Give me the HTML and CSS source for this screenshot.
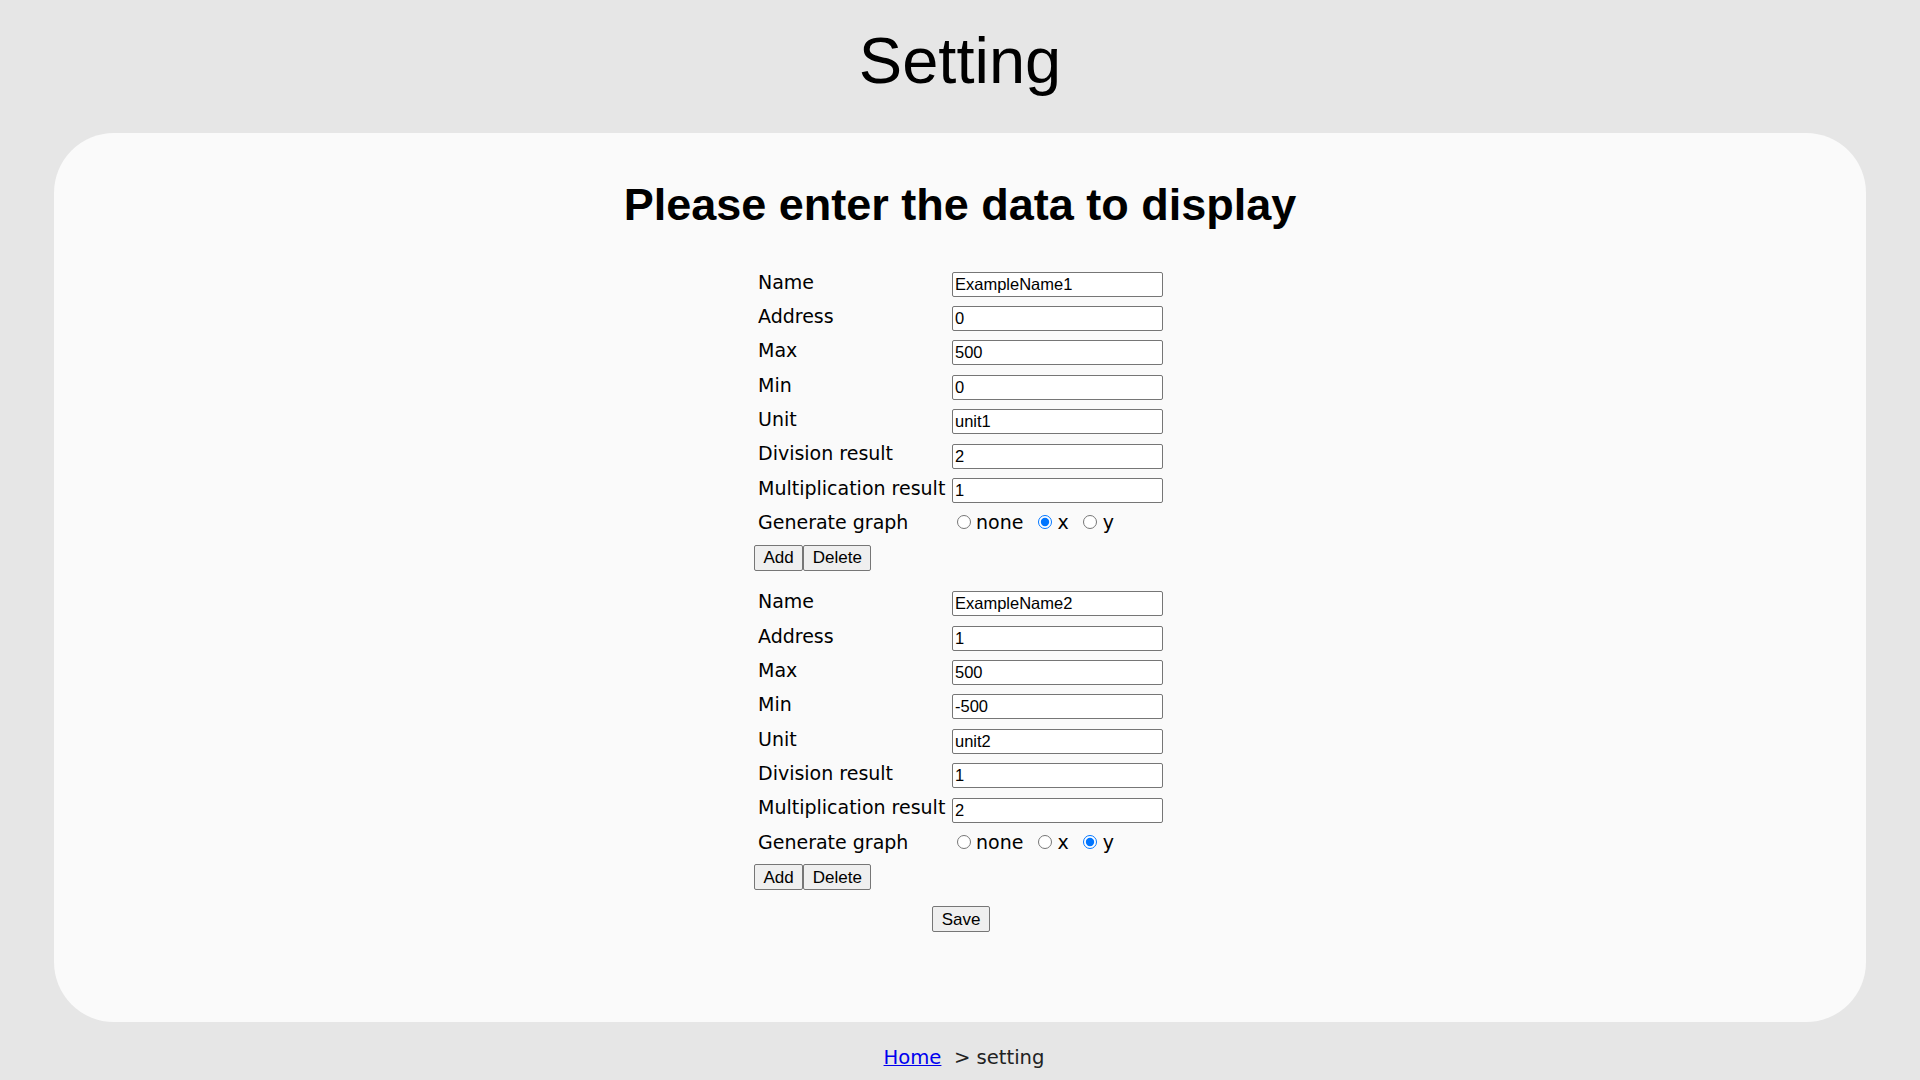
FILE: index.html
```html
<!DOCTYPE html>
<html lang="en">
<head>
<meta charset="utf-8">
<title>Setting</title>
<link rel="stylesheet" href="styles.css">
</head>
<body>
<h1 class="page-title">Setting</h1>
<main class="card">
  <h2 class="card-title">Please enter the data to display</h2>
  <form class="settings">
    <div class="entry">
      <div class="fields">
        <label class="lbl">Name</label><div class="val"><input class="txt" type="text" value="ExampleName1"></div>
        <label class="lbl">Address</label><div class="val"><input class="txt" type="text" value="0"></div>
        <label class="lbl">Max</label><div class="val"><input class="txt" type="text" value="500"></div>
        <label class="lbl">Min</label><div class="val"><input class="txt" type="text" value="0"></div>
        <label class="lbl">Unit</label><div class="val"><input class="txt" type="text" value="unit1"></div>
        <label class="lbl">Division result</label><div class="val"><input class="txt" type="text" value="2"></div>
        <label class="lbl">Multiplication result</label><div class="val"><input class="txt" type="text" value="1"></div>
        <span class="lbl">Generate graph</span>
        <div class="radios">
          <label class="opt"><input class="rad" type="radio" name="g1">none</label><label class="opt"><input class="rad" type="radio" name="g1" checked>x</label><label class="opt"><input class="rad" type="radio" name="g1">y</label>
        </div>
      </div>
      <div class="actions"><button type="button" class="btn">Add</button><button type="button" class="btn">Delete</button></div>
    </div>
    <div class="entry">
      <div class="fields">
        <label class="lbl">Name</label><div class="val"><input class="txt" type="text" value="ExampleName2"></div>
        <label class="lbl">Address</label><div class="val"><input class="txt" type="text" value="1"></div>
        <label class="lbl">Max</label><div class="val"><input class="txt" type="text" value="500"></div>
        <label class="lbl">Min</label><div class="val"><input class="txt" type="text" value="-500"></div>
        <label class="lbl">Unit</label><div class="val"><input class="txt" type="text" value="unit2"></div>
        <label class="lbl">Division result</label><div class="val"><input class="txt" type="text" value="1"></div>
        <label class="lbl">Multiplication result</label><div class="val"><input class="txt" type="text" value="2"></div>
        <span class="lbl">Generate graph</span>
        <div class="radios">
          <label class="opt"><input class="rad" type="radio" name="g2">none</label><label class="opt"><input class="rad" type="radio" name="g2">x</label><label class="opt"><input class="rad" type="radio" name="g2" checked>y</label>
        </div>
      </div>
      <div class="actions"><button type="button" class="btn">Add</button><button type="button" class="btn">Delete</button></div>
    </div>
    <div class="save-row"><button type="button" class="btn">Save</button></div>
  </form>
</main>
<footer class="crumbs"><a href="#" class="crumb-link">Home</a>&nbsp; &gt; setting</footer>
</body>
</html>
```

FILE: styles.css
```css
html, body {
  margin: 0;
  padding: 0;
}

body {
  background: #e6e6e6;
  color: #000;
  font-family: "DejaVu Sans", Verdana, sans-serif;
}

.page-title {
  margin: 24px 0 0;
  font-family: "Liberation Sans", Arial, sans-serif;
  font-weight: normal;
  font-size: 65px;
  line-height: 74px;
  text-align: center;
  color: #000;
}

.card {
  margin: 35px 54px 0;
  background: #fafafa;
  border-radius: 60px;
  padding: 46px 0 90px;
}

.card-title {
  margin: 0;
  font-family: "Liberation Sans", Arial, sans-serif;
  font-weight: bold;
  font-size: 45px;
  line-height: 52px;
  text-align: center;
}

.settings {
  width: 412px;
  margin: 36px auto 0;
  display: flex;
  flex-direction: column;
  gap: 16px;
}

.fields {
  display: grid;
  grid-template-columns: 198px 211px;
  grid-auto-rows: 34.4px;
}

.lbl {
  padding: 3.5px 0 0 4px;
  font-size: 19px;
  line-height: 22px;
  white-space: nowrap;
}

.val {
  display: flex;
  align-items: center;
}

.txt {
  box-sizing: border-box;
  width: 211px;
  height: 25px;
  margin: 0;
  padding: 0 2px;
  border: 1px solid #767676;
  border-radius: 2px;
  background: #fff;
  color: #000;
  font-family: "Liberation Sans", Arial, sans-serif;
  font-size: 16.5px;
}

.radios {
  display: flex;
  align-items: baseline;
  padding-top: 3.5px;
  font-size: 19px;
  line-height: 22px;
}

.opt {
  margin-right: 10px;
  white-space: nowrap;
}

.rad {
  width: 14px;
  height: 14px;
  margin: 0 5.5px 1.5px 4.5px;
  vertical-align: baseline;
}

.actions {
  display: flex;
  margin-top: 2.5px;
}

.btn {
  box-sizing: border-box;
  height: 26px;
  margin: 0;
  padding: 0 8.5px;
  border: 1px solid #767676;
  border-radius: 2px;
  background: #efefef;
  color: #000;
  font-family: "Liberation Sans", Arial, sans-serif;
  font-size: 17px;
  line-height: 19px;
}

.save-row {
  display: flex;
  justify-content: center;
  padding-left: 2px;
}

.crumbs {
  margin-top: 24px;
  padding-left: 8px;
  text-align: center;
  font-size: 19.6px;
  line-height: 24px;
  color: #222;
}

.crumb-link {
  color: #0000ee;
}
```
